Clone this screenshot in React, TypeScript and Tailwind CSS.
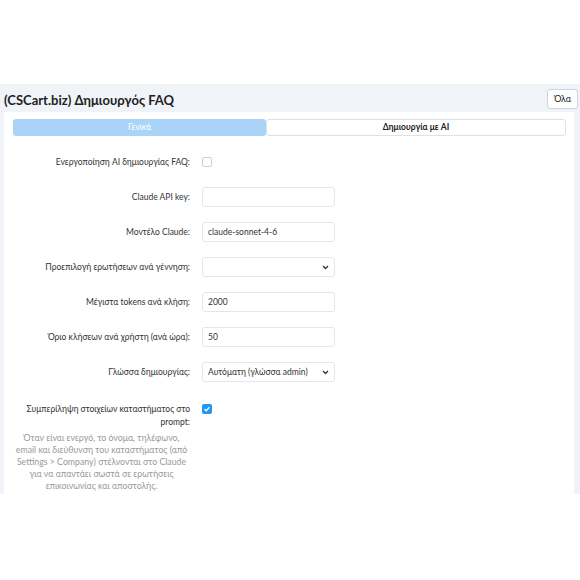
import React from "react";

const font = { fontFamily: 'Lato, "Noto Sans", sans-serif' };

function Row({ label, children }: { label: string; children?: React.ReactNode }) {
  return (
    <div className="flex items-center h-[20px] mt-[15px]">
      <div className="w-[177px] text-right text-[8.5px] text-[#333]">{label}</div>
      <div className="ml-[12px] flex items-center">{children}</div>
    </div>
  );
}

function Input({ value }: { value?: string }) {
  return (
    <div className="w-[133px] h-[20px] border border-[#e3e6ef] rounded-[3px] bg-white flex items-center px-[5px] text-[8.5px] text-[#333]">
      {value}
    </div>
  );
}

function Select({ value, w }: { value?: string; w: number }) {
  return (
    <div
      className="h-[20px] border border-[#e3e6ef] rounded-[3px] bg-white flex items-center justify-between pl-[5px] pr-[5px] text-[8.5px] text-[#333] whitespace-nowrap"
      style={{ width: w }}
    >
      <span>{value}</span>
      <svg width="7" height="5" viewBox="0 0 7 5">
        <path d="M1 1 L3.5 3.5 L6 1" fill="none" stroke="#333" strokeWidth="1.3" />
      </svg>
    </div>
  );
}

export default function App() {
  return (
    <div className="w-[580px] h-[580px] bg-white" style={font}>
      <div className="h-[84px]" />
      <div className="h-[410px] bg-[#f0f3f8] overflow-hidden pl-[4px] pr-[2px]">
        <div className="h-[28px] flex items-center justify-between">
          <div className="text-[13px] font-bold text-[#222] leading-none mt-[4px]">(CSCart.biz) Δημιουργός FAQ</div>
          <div className="h-[20px] px-[6px] border border-[#cfd3da] rounded-[3px] bg-white text-[9px] text-[#222] flex items-center mt-[2px]">Όλα</div>
        </div>
        <div className="bg-white w-[570px] h-[500px] pt-[7px] px-[9px] pr-[8px]">
          <div className="flex h-[17px]">
            <div className="w-[253px] bg-[#a9d4f8] rounded-[3px] text-white text-[8.5px] flex items-center justify-center">Γενικά</div>
            <div className="flex-1 border border-[#dde1e8] rounded-[3px] bg-white text-[8.5px] font-bold text-[#222] flex items-center justify-center">Δημιουργία με AI</div>
          </div>
          <div className="h-[1px]" />
          <Row label="Ενεργοποίηση AI δημιουργίας FAQ:">
            <div className="w-[10px] h-[10px] border border-[#c9ced8] rounded-[2px] bg-white" />
          </Row>
          <Row label="Claude API key:"><Input /></Row>
          <Row label="Μοντέλο Claude:"><Input value="claude-sonnet-4-6" /></Row>
          <Row label="Προεπιλογή ερωτήσεων ανά γέννηση:"><Select w={133} /></Row>
          <Row label="Μέγιστα tokens ανά κλήση:"><Input value="2000" /></Row>
          <Row label="Όριο κλήσεων ανά χρήστη (ανά ώρα):"><Input value="50" /></Row>
          <Row label="Γλώσσα δημιουργίας:"><Select w={133} value="Αυτόματη (γλώσσα admin)" /></Row>
          <div className="flex mt-[21px]">
            <div className="w-[177px]">
              <div className="text-right text-[8.5px] text-[#333] leading-[13px]">
                Συμπερίληψη στοιχείων καταστήματος στο prompt:
              </div>
              <div className="text-center text-[8.75px] text-[#999] leading-[12px] mt-[3px] whitespace-nowrap">
                Όταν είναι ενεργό, το όνομα, τηλέφωνο,
                <br />
                email και διεύθυνση του καταστήματος (από
                <br />
                Settings &gt; Company) στέλνονται στο Claude
                <br />
                για να απαντάει σωστά σε ερωτήσεις
                <br />
                επικοινωνίας και αποστολής.
              </div>
            </div>
            <div className="ml-[12px] mt-[1px]">
              <div className="w-[10px] h-[10px] rounded-[2px] bg-[#2196f3] flex items-center justify-center">
                <svg width="8" height="8" viewBox="0 0 8 8">
                  <path d="M1.5 4.2 L3.2 5.8 L6.5 2.3" fill="none" stroke="white" strokeWidth="1.3" />
                </svg>
              </div>
            </div>
          </div>
        </div>
      </div>
    </div>
  );
}
